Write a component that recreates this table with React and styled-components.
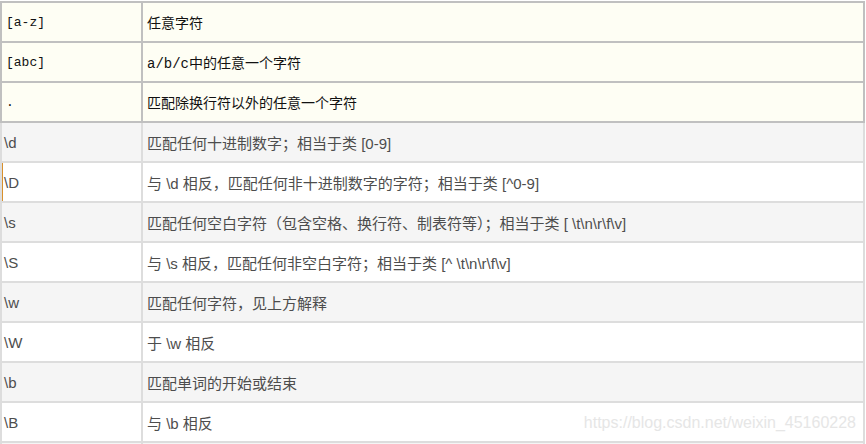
import React from "react";
import styled, { createGlobalStyle } from "styled-components";

const GlobalStyle = createGlobalStyle`
  html, body {
    margin: 0;
    padding: 0;
    background: #ffffff;
    overflow: hidden;
  }
`;

const Page = styled.div`
  position: relative;
  width: 866px;
  height: 444px;
  overflow: hidden;
`;

const Table = styled.table`
  border-collapse: collapse;
  table-layout: fixed;
  width: 865px;
  margin-top: 1px;
`;

const Row = styled.tr`
  background: ${({ $variant }) =>
    $variant === "head" ? "#fefef4" : $variant === "odd" ? "#f5f5f5" : "#ffffff"};
  td {
    border: 2px solid ${({ $variant }) => ($variant === "head" ? "#c0c0c0" : "#dddddd")};
    height: 40px;
    padding: 0 4px;
    box-sizing: border-box;
    vertical-align: middle;
    white-space: nowrap;
    font-family: ${({ $variant }) =>
      $variant === "head"
        ? `"Liberation Mono", "Noto Sans CJK SC", sans-serif`
        : `"Liberation Sans", "Noto Sans CJK SC", sans-serif`};
    font-size: ${({ $variant }) => ($variant === "head" ? "13px" : "15px")};
    color: ${({ $variant }) => ($variant === "head" ? "#111111" : "#4d4d4d")};
  }
  td:first-child {
    width: 141px;
    padding-left: ${({ $variant }) => ($variant === "head" ? "4px" : "2px")};
    box-shadow: ${({ $mark }) => ($mark ? "inset 1px 0 0 #d8902c" : "none")};
  }
  td:last-child {
    padding-left: 4px;
    font-size: ${({ $variant }) => ($variant === "head" ? "14px" : "15px")};
  }
`;

const Watermark = styled.div`
  position: absolute;
  right: 10px;
  top: 414px;
  font-family: "Liberation Sans", Arial, sans-serif;
  font-size: 16px;
  color: #e6e6e6;
  pointer-events: none;
`;

const rows = [
  { v: "head", k: "[a-z]", d: "任意字符" },
  { v: "head", k: "[abc]", d: "a/b/c中的任意一个字符" },
  { v: "head", k: ".", d: "匹配除换行符以外的任意一个字符" },
  { v: "odd", k: "\\d", d: "匹配任何十进制数字；相当于类 [0-9]" },
  { v: "even", k: "\\D", d: "与 \\d 相反，匹配任何非十进制数字的字符；相当于类 [^0-9]", mark: true },
  { v: "odd", k: "\\s", d: "匹配任何空白字符（包含空格、换行符、制表符等）；相当于类 [ \\t\\n\\r\\f\\v]" },
  { v: "even", k: "\\S", d: "与 \\s 相反，匹配任何非空白字符；相当于类 [^ \\t\\n\\r\\f\\v]" },
  { v: "odd", k: "\\w", d: "匹配任何字符，见上方解释" },
  { v: "even", k: "\\W", d: "于 \\w 相反" },
  { v: "odd", k: "\\b", d: "匹配单词的开始或结束" },
  { v: "even", k: "\\B", d: "与 \\b 相反" },
  { v: "odd", k: "", d: "" },
];

const App = () => (
  <Page>
    <GlobalStyle />
    <Table>
      <tbody>
        {rows.map((r, i) => (
          <Row key={i} $variant={r.v} $mark={r.mark}>
            <td>{r.k}</td>
            <td>{r.d}</td>
          </Row>
        ))}
      </tbody>
    </Table>
    <Watermark>https://blog.csdn.net/weixin_45160228</Watermark>
  </Page>
);

export default App;
